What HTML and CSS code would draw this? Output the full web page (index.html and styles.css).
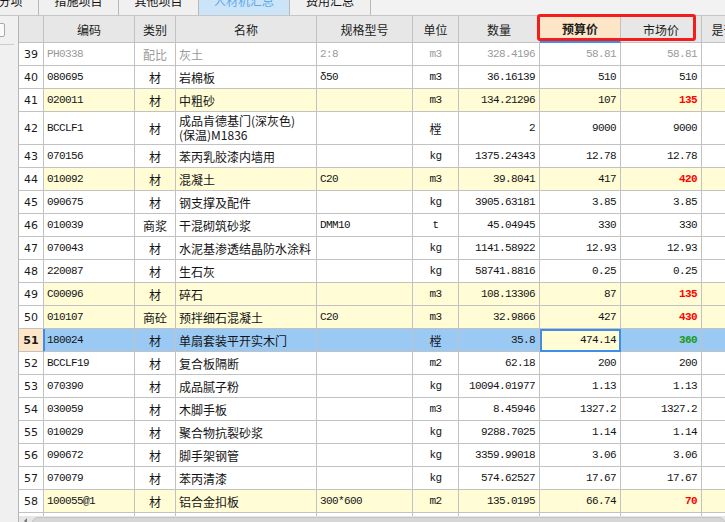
FILE: index.html
```html
<!DOCTYPE html>
<html lang="zh-CN">
<head>
<meta charset="utf-8">
<title>人材机汇总</title>
<link rel="stylesheet" href="styles.css">
</head>
<body>
<div class="tabs">
  <div class="tab first"><span class="tab-label">分部分项</span></div>
  <div class="tab"><span class="tab-label">措施项目</span></div>
  <div class="tab"><span class="tab-label">其他项目</span></div>
  <div class="tab active"><span class="tab-label">人材机汇总</span></div>
  <div class="tab last"><span class="tab-label">费用汇总</span></div>
</div>
<div class="main">
  <div class="side">
    <div class="side-btn"></div>
    <div class="side-rule"></div>
  </div>
  <div class="grid">
    <div class="rows">
      <div class="row head">
        <div class="c"></div>
        <div class="c cc">编码</div>
        <div class="c cc">类别</div>
        <div class="c cc">名称</div>
        <div class="c cc">规格型号</div>
        <div class="c cc">单位</div>
        <div class="c cc">数量</div>
        <div class="c cc hot">预算价</div>
        <div class="c cc">市场价</div>
        <div class="c cc">是否暂估</div>
      </div>

      <div class="row dim">
        <div class="c rn">39</div><div class="c m">PH0338</div><div class="c cc">配比</div><div class="c">灰土</div><div class="c m">2:8</div><div class="c cc m">m3</div><div class="c r m">328.4196</div><div class="c r m">58.81</div><div class="c r m">58.81</div><div class="c"></div>
      </div>
      <div class="row">
        <div class="c rn">40</div><div class="c m">080695</div><div class="c cc">材</div><div class="c">岩棉板</div><div class="c m">δ50</div><div class="c cc m">m3</div><div class="c r m">36.16139</div><div class="c r m">510</div><div class="c r m">510</div><div class="c"></div>
      </div>
      <div class="row diff">
        <div class="c rn">41</div><div class="c m">020011</div><div class="c cc">材</div><div class="c">中粗砂</div><div class="c m"></div><div class="c cc m">m3</div><div class="c r m">134.21296</div><div class="c r m">107</div><div class="c r m up">135</div><div class="c"></div>
      </div>
      <div class="row tall">
        <div class="c rn">42</div><div class="c m">BCCLF1</div><div class="c cc">材</div><div class="c two"><span class="ln">成品肯德基门(深灰色)</span><span class="ln">(保温)M1836</span></div><div class="c m"></div><div class="c cc">樘</div><div class="c r m">2</div><div class="c r m">9000</div><div class="c r m">9000</div><div class="c"></div>
      </div>
      <div class="row">
        <div class="c rn">43</div><div class="c m">070156</div><div class="c cc">材</div><div class="c">苯丙乳胶漆内墙用</div><div class="c m"></div><div class="c cc m">kg</div><div class="c r m">1375.24343</div><div class="c r m">12.78</div><div class="c r m">12.78</div><div class="c"></div>
      </div>
      <div class="row diff">
        <div class="c rn">44</div><div class="c m">010092</div><div class="c cc">材</div><div class="c">混凝土</div><div class="c m">C20</div><div class="c cc m">m3</div><div class="c r m">39.8041</div><div class="c r m">417</div><div class="c r m up">420</div><div class="c"></div>
      </div>
      <div class="row">
        <div class="c rn">45</div><div class="c m">090675</div><div class="c cc">材</div><div class="c">钢支撑及配件</div><div class="c m"></div><div class="c cc m">kg</div><div class="c r m">3905.63181</div><div class="c r m">3.85</div><div class="c r m">3.85</div><div class="c"></div>
      </div>
      <div class="row">
        <div class="c rn">46</div><div class="c m">010039</div><div class="c cc">商浆</div><div class="c">干混砌筑砂浆</div><div class="c m">DMM10</div><div class="c cc m">t</div><div class="c r m">45.04945</div><div class="c r m">330</div><div class="c r m">330</div><div class="c"></div>
      </div>
      <div class="row">
        <div class="c rn">47</div><div class="c m">070043</div><div class="c cc">材</div><div class="c">水泥基渗透结晶防水涂料</div><div class="c m"></div><div class="c cc m">kg</div><div class="c r m">1141.58922</div><div class="c r m">12.93</div><div class="c r m">12.93</div><div class="c"></div>
      </div>
      <div class="row">
        <div class="c rn">48</div><div class="c m">220087</div><div class="c cc">材</div><div class="c">生石灰</div><div class="c m"></div><div class="c cc m">kg</div><div class="c r m">58741.8816</div><div class="c r m">0.25</div><div class="c r m">0.25</div><div class="c"></div>
      </div>
      <div class="row diff">
        <div class="c rn">49</div><div class="c m">C00096</div><div class="c cc">材</div><div class="c">碎石</div><div class="c m"></div><div class="c cc m">m3</div><div class="c r m">108.13306</div><div class="c r m">87</div><div class="c r m up">135</div><div class="c"></div>
      </div>
      <div class="row diff">
        <div class="c rn">50</div><div class="c m">010107</div><div class="c cc">商砼</div><div class="c">预拌细石混凝土</div><div class="c m">C20</div><div class="c cc m">m3</div><div class="c r m">32.9866</div><div class="c r m">427</div><div class="c r m up">430</div><div class="c"></div>
      </div>
      <div class="row sel">
        <div class="c rn">51</div><div class="c m code">180024</div><div class="c cc">材</div><div class="c">单扇套装平开实木门</div><div class="c m"></div><div class="c cc">樘</div><div class="c r m">35.8</div><div class="c r m focus">474.14</div><div class="c r m down">360</div><div class="c"></div>
      </div>
      <div class="row">
        <div class="c rn">52</div><div class="c m">BCCLF19</div><div class="c cc">材</div><div class="c">复合板隔断</div><div class="c m"></div><div class="c cc m">m2</div><div class="c r m">62.18</div><div class="c r m">200</div><div class="c r m">200</div><div class="c"></div>
      </div>
      <div class="row">
        <div class="c rn">53</div><div class="c m">070390</div><div class="c cc">材</div><div class="c">成品腻子粉</div><div class="c m"></div><div class="c cc m">kg</div><div class="c r m">10094.01977</div><div class="c r m">1.13</div><div class="c r m">1.13</div><div class="c"></div>
      </div>
      <div class="row">
        <div class="c rn">54</div><div class="c m">030059</div><div class="c cc">材</div><div class="c">木脚手板</div><div class="c m"></div><div class="c cc m">m3</div><div class="c r m">8.45946</div><div class="c r m">1327.2</div><div class="c r m">1327.2</div><div class="c"></div>
      </div>
      <div class="row">
        <div class="c rn">55</div><div class="c m">010029</div><div class="c cc">材</div><div class="c">聚合物抗裂砂浆</div><div class="c m"></div><div class="c cc m">kg</div><div class="c r m">9288.7025</div><div class="c r m">1.14</div><div class="c r m">1.14</div><div class="c"></div>
      </div>
      <div class="row">
        <div class="c rn">56</div><div class="c m">090672</div><div class="c cc">材</div><div class="c">脚手架钢管</div><div class="c m"></div><div class="c cc m">kg</div><div class="c r m">3359.99018</div><div class="c r m">3.06</div><div class="c r m">3.06</div><div class="c"></div>
      </div>
      <div class="row">
        <div class="c rn">57</div><div class="c m">070079</div><div class="c cc">材</div><div class="c">苯丙清漆</div><div class="c m"></div><div class="c cc m">kg</div><div class="c r m">574.62527</div><div class="c r m">17.67</div><div class="c r m">17.67</div><div class="c"></div>
      </div>
      <div class="row diff">
        <div class="c rn">58</div><div class="c m">100055@1</div><div class="c cc">材</div><div class="c">铝合金扣板</div><div class="c m">300*600</div><div class="c cc m">m2</div><div class="c r m">135.0195</div><div class="c r m">66.74</div><div class="c r m up">70</div><div class="c"></div>
      </div>
      <div class="row">
        <div class="c rn">59</div><div class="c m"></div><div class="c cc"></div><div class="c"></div><div class="c m"></div><div class="c cc m"></div><div class="c r m"></div><div class="c r m"></div><div class="c r m"></div><div class="c"></div>
      </div>
    </div>
    <div class="hscroll">
      <span class="arrow"></span>
      <span class="thumb"></span>
    </div>
  </div>
</div>
<div class="callout"></div>
</body>
</html>
```

FILE: styles.css
```css
html, body {
  margin: 0;
  padding: 0;
}
body {
  width: 725px;
  height: 522px;
  overflow: hidden;
  position: relative;
  background: #f0f0f0;
  font-family: "Noto Sans CJK SC", "Liberation Sans", sans-serif;
  font-size: 12px;
  color: #141414;
}

/* ---------- tabs ---------- */
.tabs {
  display: flex;
  height: 15px;
  margin-left: -41px;
  border-bottom: 1px solid #c6c6c6;
  background: #f2f2f2;
  overflow: hidden;
}
.tab {
  flex: none;
  width: 80px;
  box-sizing: border-box;
  border-right: 1px solid #b8b8b8;
  text-align: center;
  overflow: hidden;
  background: #f0f0f0;
}
.tab.active {
  width: 91px;
  background: #cce4f8;
  color: #5eaaea;
}
.tab.last {
  width: 81px;
}
.tab-label {
  display: block;
  margin-top: -6px;
  line-height: 14px;
  font-size: 12px;
  white-space: nowrap;
}

/* ---------- main area ---------- */
.main {
  display: flex;
  height: 506px;
}
.side {
  flex: none;
  width: 18px;
  padding-top: 7px;
  box-sizing: border-box;
}
.side-btn {
  width: 12px;
  height: 12px;
  margin-left: -9px;
  border: 1px solid #a9a9a9;
  border-radius: 2px;
  background: #fafafa;
}
.side-rule {
  margin-top: 7px;
  width: 14px;
  height: 1px;
  background: #cdcdcd;
}

.grid {
  flex: 1;
  min-width: 0;
  display: flex;
  flex-direction: column;
  border-left: 1px solid #b4b4b4;
  overflow: hidden;
}
.rows {
  height: 500px;
  overflow: hidden;
  background: #fff;
}
.row {
  display: grid;
  grid-template-columns: 25px 91px 41px 141px 96px 46px 81px 81px 81px 68px;
  height: 23px;
}
.row.head {
  height: 27px;
}
.row.tall {
  height: 33px;
}
.c {
  box-sizing: border-box;
  border-right: 1px solid #c2c2c2;
  border-bottom: 1px solid #c2c2c2;
  padding: 0 3px;
  display: flex;
  align-items: center;
  white-space: nowrap;
  overflow: hidden;
  background: #fff;
}
.head .c {
  background: #e7e7e7;
  justify-content: center;
  color: #1c1c1c;
}
.head .c.hot {
  background: #fde6c8;
  font-weight: bold;
  border-bottom: 2px solid #3d8ee8;
}
.cc {
  justify-content: center;
}
.r {
  justify-content: flex-end;
  padding-right: 4px;
}
.m {
  font-family: "Liberation Mono", "DejaVu Sans Mono", monospace;
  font-size: 11px;
  letter-spacing: -0.6px;
}
.rn {
  justify-content: center;
  padding: 0;
  font-family: "DejaVu Sans", "Liberation Sans", sans-serif;
  font-size: 11px;
  color: #1a1a1a;
}
.c.two {
  flex-direction: column;
  align-items: flex-start;
  justify-content: center;
}
.ln {
  display: block;
  height: 14px;
  line-height: 14px;
}

/* row states */
.dim .c {
  color: #9a9a9a;
}
.dim .c.rn {
  color: #1a1a1a;
}
.diff .c {
  background: #fffcd6;
}
.diff .c.rn {
  background: #fff;
}
.up {
  color: #ff0000;
  font-weight: bold;
}
.down {
  color: #1a9b1a;
  font-weight: bold;
}
.sel .c {
  background: #9ac9f4;
}
.sel .c.rn {
  background: #fde6c8;
  font-weight: bold;
  border-right-color: #3d8ee8;
}
.sel .c.code {
  box-shadow: inset 1px 0 0 #3d8ee8;
}
.sel .c.focus {
  background: #fffcd6;
  outline: 2px solid #3d8ee8;
  outline-offset: -2px;
}

/* ---------- scrollbar ---------- */
.hscroll {
  height: 6px;
  display: flex;
  align-items: flex-start;
  background: #e6e6e6;
  padding-left: 5px;
  overflow: hidden;
}
.arrow {
  flex: none;
  width: 0;
  height: 0;
  margin-top: 2px;
  border-top: 3px solid transparent;
  border-bottom: 3px solid transparent;
  border-right: 3px solid #7a7a7a;
}
.thumb {
  flex: 1;
  height: 12px;
  margin-left: 5px;
  margin-top: 1px;
  border: 1px solid #c4c4c4;
  border-radius: 6px;
  background: #d6d6d6;
}

/* ---------- annotation overlay ---------- */
.callout {
  position: absolute;
  left: 537px;
  top: 14px;
  width: 159px;
  height: 27px;
  box-sizing: border-box;
  border: 3px solid #f41d1d;
  border-radius: 3px;
  pointer-events: none;
}
```
